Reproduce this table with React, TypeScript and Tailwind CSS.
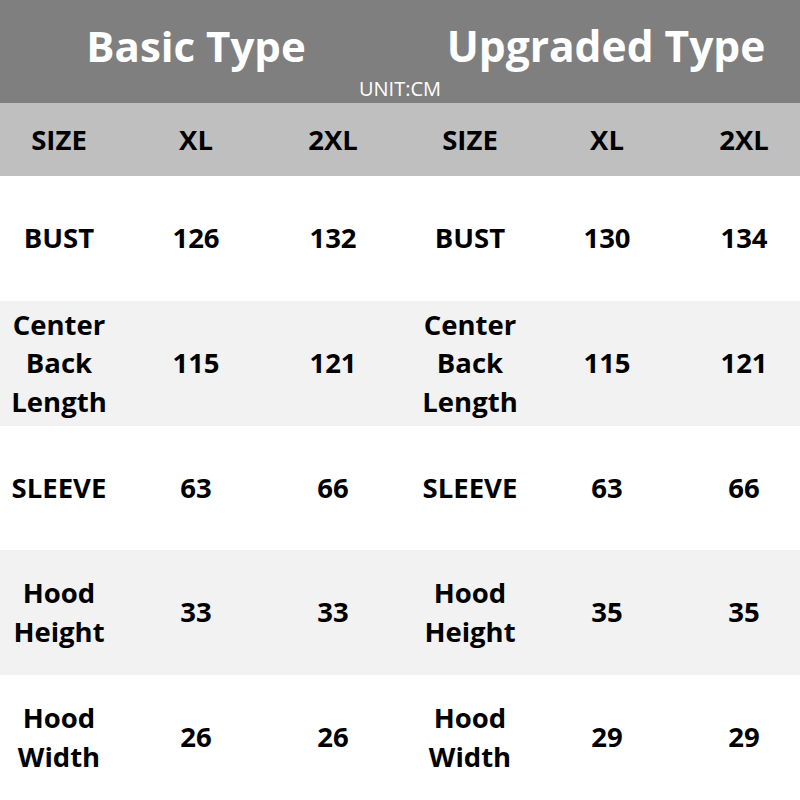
import React from "react";

const cols = ["w-[118px]", "w-[156px]", "w-[118px]", "w-[156px]", "w-[118px]", "w-[134px] pl-[22px]"];

type Row = { cells: string[][]; bg: string; h: string };

const rows: Row[] = [
  { cells: [["BUST"], ["126"], ["132"], ["BUST"], ["130"], ["134"]], bg: "bg-white", h: "h-[125px]" },
  {
    cells: [["Center", "Back", "Length"], ["115"], ["121"], ["Center", "Back", "Length"], ["115"], ["121"]],
    bg: "bg-[#f2f2f2]",
    h: "h-[125px]",
  },
  { cells: [["SLEEVE"], ["63"], ["66"], ["SLEEVE"], ["63"], ["66"]], bg: "bg-white", h: "h-[124px]" },
  {
    cells: [["Hood", "Height"], ["33"], ["33"], ["Hood", "Height"], ["35"], ["35"]],
    bg: "bg-[#f2f2f2]",
    h: "h-[125px]",
  },
  {
    cells: [["Hood", "Width"], ["26"], ["26"], ["Hood", "Width"], ["29"], ["29"]],
    bg: "bg-white",
    h: "h-[125px]",
  },
];

export default function App() {
  return (
    <div
      className="w-[800px] h-[800px] overflow-hidden flex flex-col text-black"
      style={{ fontFamily: '"Open Sans", "Noto Sans", sans-serif' }}
    >
      <div className="h-[103px] bg-[#7f7f7f] flex flex-col shrink-0">
        <div className="flex h-[80px] items-end">
          <div className="w-[392px] text-center text-white font-bold text-[42px] leading-[60px] pb-[4px]">Basic Type</div>
          <div className="w-[408px] pl-[20px] text-center text-white font-bold text-[42.5px] leading-[60px] pb-[4px]">
            Upgraded Type
          </div>
        </div>
        <div className="text-center text-white text-[20px] leading-[20px] mt-[-1px]">UNIT:CM</div>
      </div>
      <div className="h-[73px] bg-[#bfbfbf] flex items-center shrink-0">
        {["SIZE", "XL", "2XL", "SIZE", "XL", "2XL"].map((t, i) => (
          <div key={i} className={`${cols[i]} text-center font-bold text-[27.5px] leading-[38px]`}>
            {t}
          </div>
        ))}
      </div>
      {rows.map((r, ri) => (
        <div key={ri} className={`${r.bg} ${r.h} flex items-center shrink-0`}>
          {r.cells.map((lines, i) => (
            <div key={i} className={`${cols[i]} text-center font-bold text-[27.5px] leading-[38.5px] flex flex-col`}>
              {lines.map((l, li) => (
                <span key={li}>{l}</span>
              ))}
            </div>
          ))}
        </div>
      ))}
    </div>
  );
}
